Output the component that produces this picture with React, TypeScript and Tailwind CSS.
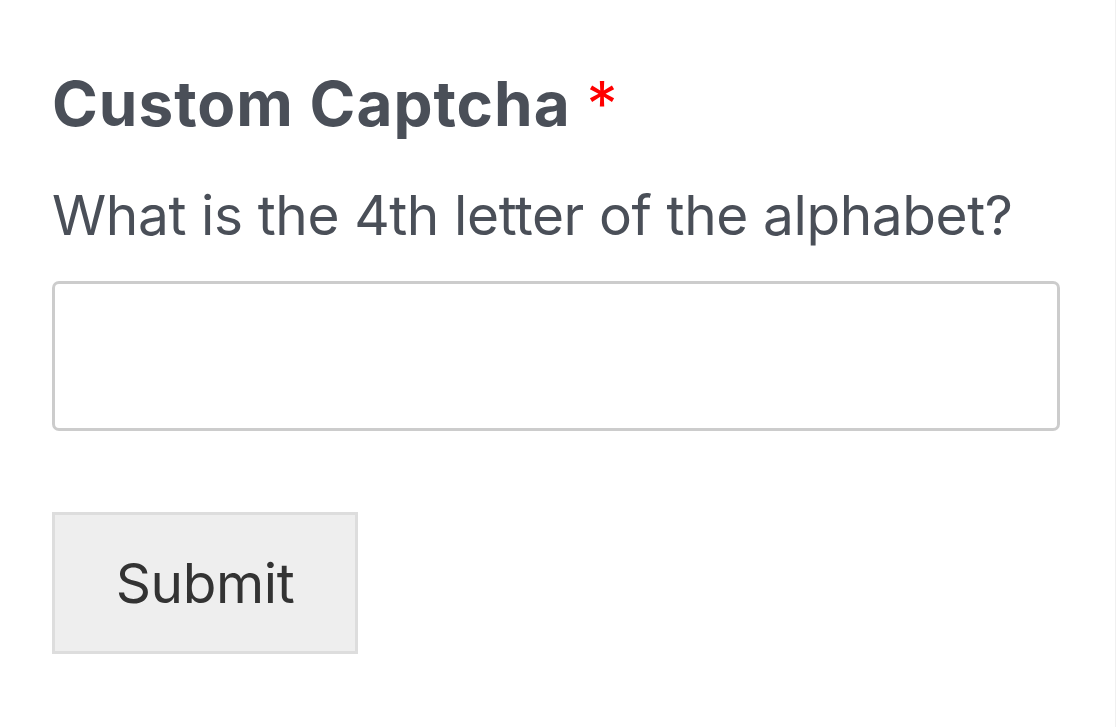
export default function App() {
  return (
    <div className="min-h-[727px] w-full bg-white border-r border-[#f0f0f0] font-['Inter','Noto_Sans',sans-serif]">
      <form className="pl-[52px] pr-[55px] pt-[67px]" onSubmit={(e) => e.preventDefault()}>
        <label className="block text-[62px] leading-[74px] font-bold text-[#4a4f58] tracking-[1px]">
          Custom Captcha <span className="text-[#ff0000] font-normal">*</span>
        </label>
        <p className="mt-[41px] text-[55px] leading-[66px] text-[#4a4f58] tracking-[-0.4px]">
          What is the 4th letter of the alphabet?
        </p>
        <input
          type="text"
          className="mt-[33px] block w-full h-[150px] rounded-[7px] border-[3px] border-[#cccccc] bg-white px-4 text-[55px] outline-none"
        />
        <button
          type="submit"
          className="mt-[81px] flex items-center justify-center w-[306px] h-[142px] border-[3px] border-[#dddddd] bg-[#eeeeee] text-[55px] text-[#333333] tracking-[-0.4px]"
        >
          Submit
        </button>
      </form>
    </div>
  );
}
